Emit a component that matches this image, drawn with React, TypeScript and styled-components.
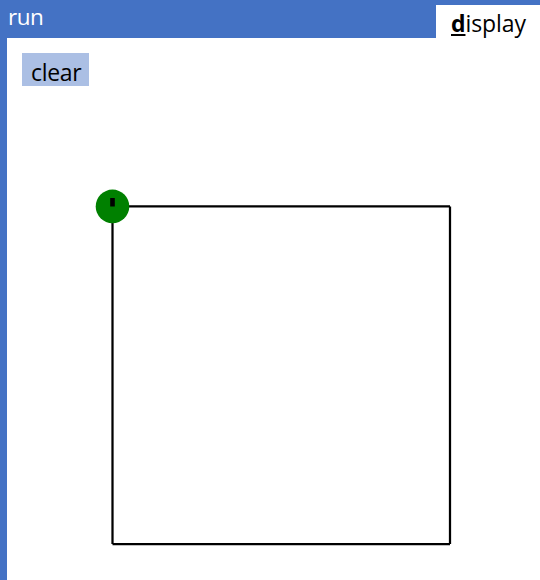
import React from "react";
import styled, { createGlobalStyle } from "styled-components";

const GlobalStyle = createGlobalStyle`
  * { box-sizing: border-box; }
  html, body { margin: 0; overflow: hidden; }
`;

const Frame = styled.div`
  display: flex;
  flex-direction: column;
  width: 540px;
  height: 580px;
  padding-left: 7px;
  background: #4472c4;
  color: #000;
  font-family: "Open Sans", "Noto Sans", sans-serif;
  font-size: 23px;
  line-height: 30px;
`;

const TabBar = styled.header`
  display: flex;
  flex: 0 0 38px;
  justify-content: space-between;
`;

const RunLabel = styled.span`
  padding: 2px 0 0 1px;
  color: #fff;
  font-size: 22.5px;
  letter-spacing: -0.5px;
`;

const DisplayTab = styled.span`
  width: 104px;
  height: 33px;
  margin-top: 5px;
  padding: 3px 0 0 15px;
  background: #fff;
  letter-spacing: -0.1px;
  white-space: nowrap;
`;

const AccessKey = styled.b`
  text-decoration: underline;
  text-decoration-thickness: 2px;
  text-underline-offset: 2px;
`;

const Panel = styled.main`
  display: flex;
  flex: 1;
  flex-direction: column;
  align-items: flex-start;
  padding: 15px 0 0 15px;
  background: #fff;
`;

const ClearButton = styled.button`
  width: 67px;
  height: 33px;
  padding: 5px 0 0 9px;
  border: 0;
  background: #abbfe4;
  color: #000;
  font: inherit;
  line-height: 28px;
  letter-spacing: -0.3px;
  text-align: left;
  white-space: nowrap;
`;

const Canvas = styled.svg`
  display: block;
  width: 518px;
  height: 494px;
`;

export default function App() {
  return (
    <>
      <GlobalStyle />
      <Frame>
        <TabBar>
          <RunLabel>run</RunLabel>
          <DisplayTab><AccessKey>d</AccessKey>isplay</DisplayTab>
        </TabBar>
        <Panel>
          <ClearButton>clear</ClearButton>
          <Canvas viewBox="22 86 518 494">
            <path
              d="M112.5 206.4H450M450 206.4V544M450 544H112.5M112.5 544V206.4"
              fill="none"
              stroke="#000"
              strokeWidth="2.25"
            />
            <circle cx="112.5" cy="206.4" r="16.8" fill="#008000" />
            <rect x="110.2" y="198" width="4.6" height="8.5" fill="#000" />
          </Canvas>
        </Panel>
      </Frame>
    </>
  );
}
